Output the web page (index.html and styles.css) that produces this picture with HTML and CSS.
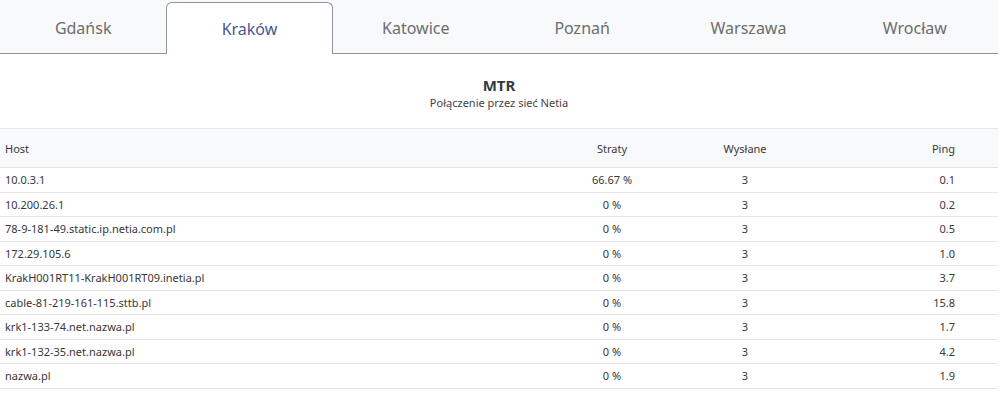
FILE: index.html
```html
<!DOCTYPE html>
<html lang="pl">
<head>
<meta charset="utf-8">
<title>MTR</title>
<link rel="stylesheet" href="styles.css">
</head>
<body>
<div class="page">
  <nav class="tabs">
    <div class="tab">Gdańsk</div>
    <div class="tab active">Kraków</div>
    <div class="tab">Katowice</div>
    <div class="tab">Poznań</div>
    <div class="tab">Warszawa</div>
    <div class="tab">Wrocław</div>
  </nav>
  <header class="heading">
    <h1 class="title">MTR</h1>
    <p class="subtitle">Połączenie przez sieć Netia</p>
  </header>
  <table class="mtr">
    <thead>
      <tr><th class="c-host">Host</th><th class="c-loss">Straty</th><th class="c-sent">Wysłane</th><th class="c-ping">Ping</th></tr>
    </thead>
    <tbody>
      <tr><td class="c-host">10.0.3.1</td><td class="c-loss">66.67 %</td><td class="c-sent">3</td><td class="c-ping">0.1</td></tr>
      <tr><td class="c-host">10.200.26.1</td><td class="c-loss">0 %</td><td class="c-sent">3</td><td class="c-ping">0.2</td></tr>
      <tr><td class="c-host">78-9-181-49.static.ip.netia.com.pl</td><td class="c-loss">0 %</td><td class="c-sent">3</td><td class="c-ping">0.5</td></tr>
      <tr><td class="c-host">172.29.105.6</td><td class="c-loss">0 %</td><td class="c-sent">3</td><td class="c-ping">1.0</td></tr>
      <tr><td class="c-host">KrakH001RT11-KrakH001RT09.inetia.pl</td><td class="c-loss">0 %</td><td class="c-sent">3</td><td class="c-ping">3.7</td></tr>
      <tr><td class="c-host">cable-81-219-161-115.sttb.pl</td><td class="c-loss">0 %</td><td class="c-sent">3</td><td class="c-ping">15.8</td></tr>
      <tr><td class="c-host">krk1-133-74.net.nazwa.pl</td><td class="c-loss">0 %</td><td class="c-sent">3</td><td class="c-ping">1.7</td></tr>
      <tr><td class="c-host">krk1-132-35.net.nazwa.pl</td><td class="c-loss">0 %</td><td class="c-sent">3</td><td class="c-ping">4.2</td></tr>
      <tr><td class="c-host">nazwa.pl</td><td class="c-loss">0 %</td><td class="c-sent">3</td><td class="c-ping">1.9</td></tr>
    </tbody>
  </table>
</div>
</body>
</html>
```

FILE: styles.css
```css
html, body {
  margin: 0;
  padding: 0;
  background: #ffffff;
}
body {
  font-family: "Noto Sans", "Open Sans", sans-serif;
  color: #333;
}
.page {
  width: 998px;
}
.tabs {
  display: grid;
  grid-template-columns: repeat(6, 1fr);
  background: #f8f9fa;
  padding-top: 2px;
  border-bottom: 1px solid #8e939b;
}
.tab {
  height: 50px;
  display: flex;
  align-items: center;
  justify-content: center;
  font-size: 16px;
  color: #6d6d6d;
  border: 1px solid transparent;
  border-bottom: 0;
  margin-bottom: -1px;
}
.tab.active {
  background: #fff;
  color: #4a5796;
  border-color: #8e939b;
  border-radius: 6px 6px 0 0;
  height: 51px;
}
.heading {
  text-align: center;
  padding-top: 21px;
  height: 74px;
  box-sizing: border-box;
}
.title {
  margin: 0;
  font-size: 15px;
  font-weight: 700;
  line-height: 20px;
  color: #343a40;
}
.subtitle {
  margin: 0;
  font-size: 11px;
  line-height: 16px;
  color: #444;
}
.mtr {
  width: 100%;
  border-collapse: collapse;
  font-size: 11px;
  color: #383838;
}
.mtr th {
  font-weight: 400;
  background: #f8f9fa;
  height: 38px;
  border-top: 1px solid #e6e8eb;
  border-bottom: 1px solid #dfe2e6;
}
.mtr td {
  height: 23.5px;
  border-bottom: 1px solid #e3e6e9;
}
.mtr th, .mtr td {
  padding: 0;
  vertical-align: middle;
}
.c-host {
  text-align: left;
  padding-left: 5px !important;
  width: 545px;
}
.c-loss {
  text-align: center;
  width: 124px;
}
.c-sent {
  text-align: center;
  width: 142px;
}
.c-ping {
  text-align: right;
  padding-right: 43px !important;
}
```
